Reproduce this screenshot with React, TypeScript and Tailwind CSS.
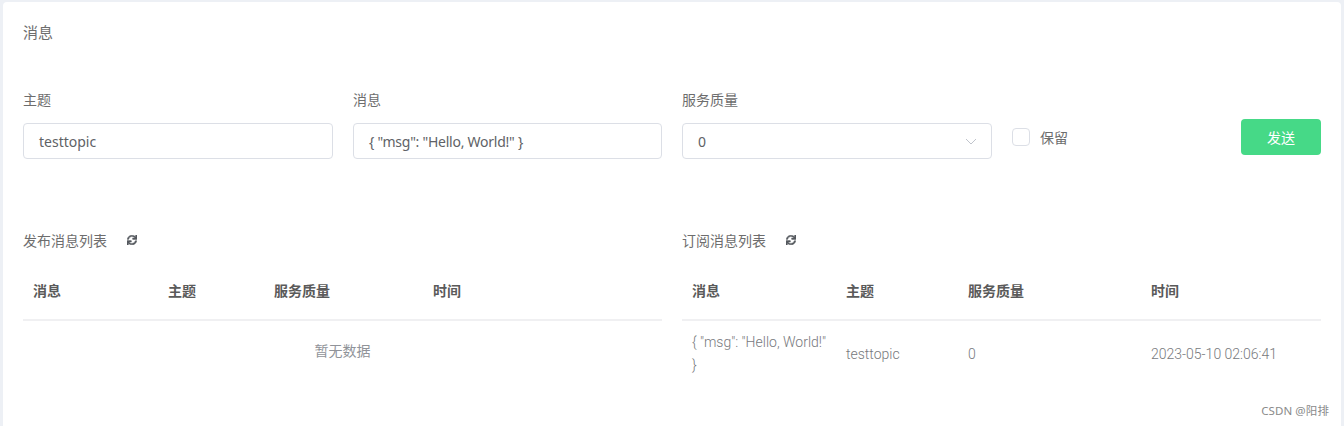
import React from "react";
import { FaSync } from "react-icons/fa";

const ui = "font-['Noto_Sans','Noto_Sans_CJK_SC',sans-serif]";
const cell = "font-['Roboto','Noto_Sans_CJK_SC',sans-serif]";

function Field({ label, value, chevron, tight }: { label: string; value: string; chevron?: boolean; tight?: boolean }) {
  return (
    <div className="flex flex-col">
      <div className="h-[22px] text-[14px] leading-[20px] text-[#6d6d6d]">{label}</div>
      <div className="mt-[11px] flex h-9 items-center justify-between rounded-[4px] border border-[#dcdfe6] bg-white pl-[15px] pr-[14px] text-[14px] text-[#606266]">
        <span className={tight ? "tracking-[-0.25px]" : ""}>{value}</span>
        {chevron && (
          <svg width="12" height="7" viewBox="0 0 12 7" fill="none" stroke="#c0c4cc" strokeWidth="1">
            <path d="M1 1l5 5 5-5" />
          </svg>
        )}
      </div>
    </div>
  );
}

type Col = { w: string; h: string };

function List({
  title,
  cols,
  children,
}: {
  title: string;
  cols: Col[];
  children: React.ReactNode;
}) {
  return (
    <div className="flex flex-col">
      <div className="flex h-[18px] items-center text-[14px] text-[#6d6d6d]">
        <span>{title}</span>
        <FaSync className="ml-[20px] text-[#55595f] stroke-[#55595f] stroke-[24]" size={10} />
      </div>
      <div className="mt-[21px] flex h-[51px] border-b-2 border-[#f0f0f2] pb-[8px] text-[14px] font-bold text-[#5a5a5a]">
        {cols.map((c) => (
          <div key={c.h} className={`${c.w} flex items-center pl-[10px]`}>
            {c.h}
          </div>
        ))}
      </div>
      {children}
    </div>
  );
}

export default function App() {
  return (
    <div className={`${ui} h-[426px] w-[1344px] overflow-hidden bg-[#edf0f5] pl-[3px] pr-[3px] pt-[2px]`}>
      <div className="relative h-[424px] rounded-t-[4px] bg-white px-5 pt-[20px]">
        <div className="h-5 text-[15px] leading-5 text-[#6d6d6d]">消息</div>

        <div className="mt-[48px] flex items-start">
          <div className="w-[310px]">
            <Field label="主题" value="testtopic" />
          </div>
          <div className="ml-5 w-[309px]">
            <Field label="消息" value={'{ "msg": "Hello, World!" }'} tight />
          </div>
          <div className="ml-5 w-[310px]">
            <Field label="服务质量" value="0" chevron />
          </div>
          <div className="ml-5 mt-[32px] flex h-[30px] items-center">
            <span className="h-[18px] w-[18px] rounded-[4px] border border-[#dcdfe6] bg-white" />
            <span className="ml-[10px] text-[14px] text-[#6d6d6d]">保留</span>
          </div>
          <button className="ml-auto mt-[29px] h-9 w-20 rounded-[4px] bg-[#46d987] text-[14px] text-white">
            发送
          </button>
        </div>

        <div className="mt-[72px] grid grid-cols-[639px_639px] gap-x-5">
          <List
            title="发布消息列表"
            cols={[
              { w: "w-[135px]", h: "消息" },
              { w: "w-[106px]", h: "主题" },
              { w: "w-[159px]", h: "服务质量" },
              { w: "flex-1", h: "时间" },
            ]}
          >
            <div className={`${ui} mt-[19px] text-center text-[14px] leading-[22px] text-[#909399]`}>
              暂无数据
            </div>
          </List>
          <List
            title="订阅消息列表"
            cols={[
              { w: "w-[154px]", h: "消息" },
              { w: "w-[122px]", h: "主题" },
              { w: "w-[183px]", h: "服务质量" },
              { w: "flex-1", h: "时间" },
            ]}
          >
            <div className={`${cell} flex pt-[10px] text-[14px] font-light leading-[23px] text-[#77797d]`}>
              <div className="w-[154px] pl-[10px] pr-[6px]">{'{ "msg": "Hello, World!" }'}</div>
              <div className="flex w-[122px] items-center pl-[10px]">testtopic</div>
              <div className="flex w-[183px] items-center pl-[10px]">0</div>
              <div className="flex flex-1 items-center pl-[10px]">2023-05-10 02:06:41</div>
            </div>
          </List>
        </div>

        <div className="absolute right-[12px] top-[401px] text-[11.5px] leading-4 tracking-[0.1px] text-[#8a8a8a]">CSDN @阳排</div>
      </div>
    </div>
  );
}
